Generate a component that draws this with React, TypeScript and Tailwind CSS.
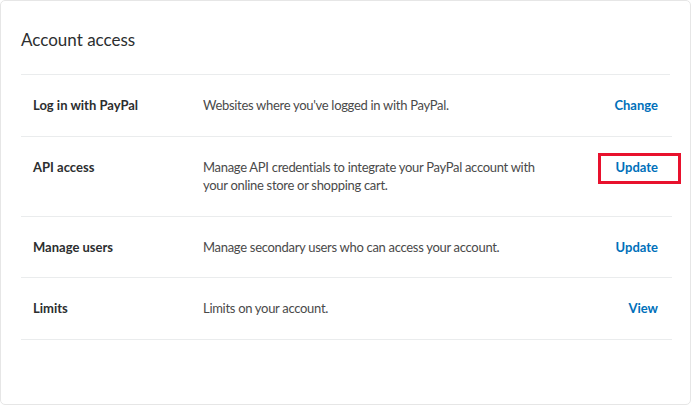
import React from 'react';

type Row = {
  label: string;
  description: string;
  action: string;
  highlighted?: boolean;
};

const rows: Row[] = [
  { label: 'Log in with PayPal', description: "Websites where you've logged in with PayPal.", action: 'Change' },
  {
    label: 'API access',
    description: 'Manage API credentials to integrate your PayPal account with your online store or shopping cart.',
    action: 'Update',
    highlighted: true,
  },
  { label: 'Manage users', description: 'Manage secondary users who can access your account.', action: 'Update' },
  { label: 'Limits', description: 'Limits on your account.', action: 'View' },
];

const App = () => {
  return (
    <div className="w-[692px] h-[406px] bg-white" style={{ fontFamily: 'Lato, "Noto Sans", sans-serif' }}>
      <div className="w-[691px] h-[405px] border border-[#e6e6e6] rounded-[5px] px-[20px]">
        {/* Header */}
        <div className="pt-[27px] pb-[22px] border-b border-[#eaeced]">
          <h1 className="text-[17px] leading-[24px] text-[#2c2e2f]">Account access</h1>
        </div>

        {/* Rows */}
        <div className="w-[651px]">
          {rows.map((row) => (
            <div key={row.label} className="flex py-[21px] border-b border-[#eaeced] text-[13px] leading-[18.5px]">
              <div className="w-[182px] pl-[12px] font-bold text-[#2c2e2f]">{row.label}</div>
              <div className="w-[345px] text-[#4a4a4a] tracking-[-0.3px]">{row.description}</div>
              <div className="flex-1 text-right pr-[14px]">
                <a href="#" className="relative font-bold text-[#0070ba]">
                  {row.action}
                  {row.highlighted && (
                    <span className="absolute -left-[18px] -right-[23px] -top-[6px] -bottom-[9px] border-[3px] border-[#e8112d]" />
                  )}
                </a>
              </div>
            </div>
          ))}
        </div>
      </div>
    </div>
  );
};

export default App;
